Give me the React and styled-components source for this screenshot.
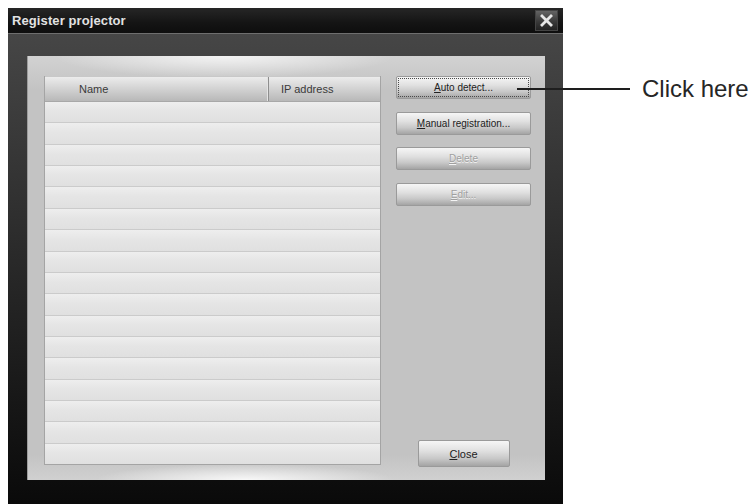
import React from 'react';
import styled, { createGlobalStyle } from 'styled-components';

const GlobalStyle = createGlobalStyle`
    html, body {
        margin: 0;
        padding: 0;
        background: #ffffff;
        overflow: hidden;
    }
    body {
        font-family: "Liberation Sans", Arial, sans-serif;
    }
`;

const rows = Array.from({ length: 17 }, (_, i) => i);

const buttons = [
    { key: 'A', rest: 'uto detect...', focused: true },
    { key: 'M', rest: 'anual registration...' },
    { key: 'D', rest: 'elete', disabled: true },
    { key: 'E', rest: 'dit...', disabled: true },
];

const CloseGlyph = () => (
    <svg width="13" height="13" viewBox="0 0 13 13">
        <path d="M2 2 L11 11 M11 2 L2 11" stroke="#e6e6e6" strokeWidth="2.8" strokeLinecap="square" />
    </svg>
);

export default function App() {
    return (
        <Page>
            <GlobalStyle />
            <Window>
                <TitleBar>
                    <Title>Register projector</Title>
                    <CloseBox>
                        <CloseGlyph />
                    </CloseBox>
                </TitleBar>
                <Frame>
                    <Panel>
                        <List>
                            <Header>
                                <HeaderCell width="224px" pad="34px">Name</HeaderCell>
                                <HeaderCell pad="12px">IP address</HeaderCell>
                            </Header>
                            <Body>
                                {rows.map(r => <Row key={r} />)}
                            </Body>
                        </List>
                        <Side>
                            {buttons.map(b => (
                                <Button key={b.key} disabled={b.disabled} focused={b.focused}>
                                    <u>{b.key}</u>{b.rest}
                                </Button>
                            ))}
                            <CloseButton>
                                <u>C</u>lose
                            </CloseButton>
                        </Side>
                    </Panel>
                </Frame>
            </Window>
            <Callout>
                <Leader />
                <CalloutText>Click here</CalloutText>
            </Callout>
        </Page>
    );
}

const Page = styled.div`
    position: relative;
    width: 751px;
    height: 504px;
    padding: 8px 0 0 8px;
    box-sizing: border-box;
`;

const Window = styled.div`
    width: 555px;
    height: 496px;
    display: flex;
    flex-direction: column;
    background: #111;
    box-shadow: inset 1px 1px 0 #8a8a8a;
`;

const TitleBar = styled.div`
    height: 25px;
    display: flex;
    align-items: center;
    justify-content: space-between;
    padding: 0 5px 0 4px;
    background: linear-gradient(to bottom, #262626, #141414 60%, #0e0e0e);
    border-bottom: 1px solid #6e6e6e;
`;

const Title = styled.span`
    font-family: "Liberation Sans", Arial, sans-serif;
    font-weight: bold;
    font-size: 13px;
    color: #e2e2e2;
    letter-spacing: 0.1px;
`;

const CloseBox = styled.div`
    width: 23px;
    height: 21px;
    display: flex;
    align-items: center;
    justify-content: center;
    background: linear-gradient(to bottom, #646464, #3a3a3a 55%, #222);
    border: 1px solid #444;
    box-sizing: border-box;
`;

const Frame = styled.div`
    flex: 1;
    display: flex;
    padding: 22px 21px 24px 19px;
    background: linear-gradient(to bottom, #464646, #343434 30%, #1c1c1c 70%, #0a0a0a);
`;

const Panel = styled.div`
    flex: 1;
    display: flex;
    gap: 15px;
    padding: 20px 14px 15px 16px;
    background:
        radial-gradient(ellipse 170px 22px at 38% 0%, rgba(255,255,255,0.75), rgba(255,255,255,0) 100%),
        radial-gradient(ellipse 150px 16px at 42% 100%, rgba(255,255,255,0.85), rgba(255,255,255,0) 100%),
        linear-gradient(to bottom, #d2d2d2, #c3c3c3 8%, #c3c3c3 94%, #d0d0d0);
    border-left: 1px solid #9c9c9c;
`;

const List = styled.div`
    width: 335px;
    display: flex;
    flex-direction: column;
    border: 1px solid #a4a4a4;
    border-top: none;
    background: #e6e6e6;
`;

const Header = styled.div`
    height: 26px;
    display: flex;
    background: linear-gradient(to bottom, #ececec, #d2d2d2 50%, #b8b8b8);
    border-top: 1px solid #c8c8c8;
    border-bottom: 1px solid #a8a8a8;
    box-sizing: border-box;
`;

const HeaderCell = styled.div`
    width: ${p => p.width || 'auto'};
    flex: ${p => (p.width ? 'none' : 1)};
    display: flex;
    align-items: center;
    padding-left: ${p => p.pad};
    box-sizing: border-box;
    font-size: 11px;
    color: #3a3a3a;
    border-right: 1px solid #8e8e8e;
    box-shadow: inset -1px 0 0 #e4e4e4;
    &:last-child {
        border-right: none;
        box-shadow: none;
    }
`;

const Body = styled.div`
    flex: 1;
    display: flex;
    flex-direction: column;
    box-shadow: inset 2px 0 0 #d2d2d2;
`;

const Row = styled.div`
    flex: 1;
    background: linear-gradient(to bottom, #eeeeee, #e5e5e5 45%, #e0e0e0);
    border-bottom: 1px solid #cbcbcb;
    &:last-child {
        border-bottom: none;
    }
`;

const Side = styled.div`
    width: 135px;
    display: flex;
    flex-direction: column;
    align-items: center;
    gap: 12.5px;
`;

const Button = styled.div`
    width: 100%;
    height: 23px;
    display: flex;
    align-items: center;
    justify-content: center;
    box-sizing: border-box;
    border: 1px solid #9a9a9a;
    border-radius: 2px;
    background: linear-gradient(to bottom, #f6f6f6, #e0e0e0 40%, #c8c8c8 70%, #a4a4a4);
    font-size: 10px;
    color: ${p => (p.disabled ? '#a0a0a0' : '#222')};
    text-shadow: ${p => (p.disabled ? '0 1px 0 #f4f4f4' : 'none')};
    outline: ${p => (p.focused ? '1px dotted #4a4a4a' : 'none')};
    outline-offset: -3px;
    u {
        text-underline-offset: 1px;
    }
`;

const CloseButton = styled(Button)`
    width: 92px;
    height: 27px;
    margin-top: auto;
    margin-bottom: -2px;
    font-size: 11px;
`;

const Callout = styled.div`
    position: absolute;
    left: 517px;
    top: 75px;
    height: 28px;
    display: flex;
    align-items: center;
    gap: 12px;
`;

const Leader = styled.div`
    width: 113px;
    height: 1.5px;
    background: #1e1e1e;
`;

const CalloutText = styled.span`
    font-family: "Liberation Sans", Arial, sans-serif;
    font-size: 24px;
    color: #262626;
    white-space: nowrap;
`;
